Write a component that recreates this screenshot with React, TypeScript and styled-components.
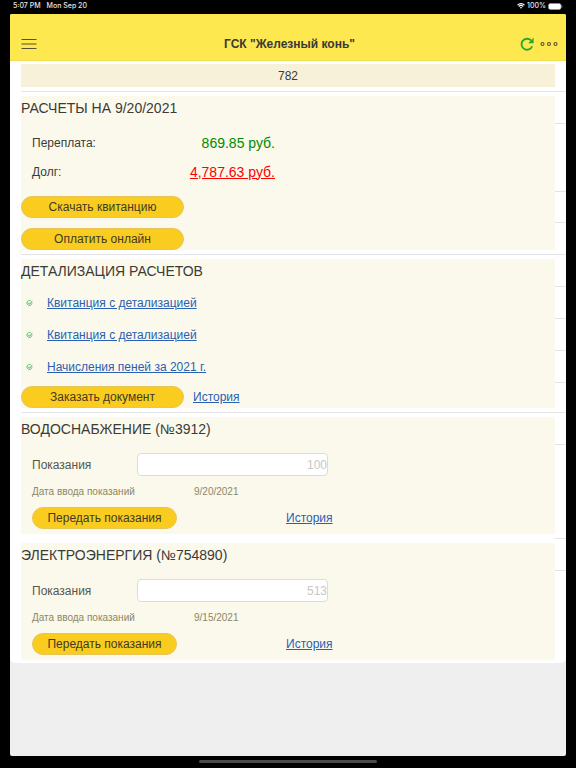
import React from "react";
import styled, { createGlobalStyle } from "styled-components";

const GlobalStyle = createGlobalStyle`
  *, *::before, *::after { box-sizing: border-box; }
  body {
    margin: 0;
    background: #000;
    color: #3b3b38;
    font-family: "Liberation Sans", Arial, sans-serif;
    font-size: 12px;
  }
  h1, h2, p, ul { margin: 0; padding: 0; font-weight: normal; }
`;

const Device = styled.div`
  display: flex;
  flex-direction: column;
  min-height: 100vh;
  padding: 0 10px;
  background: #000;
`;

const StatusBar = styled.div`
  display: flex;
  justify-content: space-between;
  align-items: center;
  height: 14px;
  padding: 0 3px;
  padding-bottom: 2px;
  color: #e8e8e8;
  font-family: Inter, sans-serif;
  font-size: 7px;
  font-weight: 500;
  line-height: 12px;
`;

const StatusGroup = styled.div<{ $gap: number }>`
  display: flex;
  align-items: center;
  gap: ${(p) => p.$gap}px;
`;

const Screen = styled.div`
  flex: 1;
  border-radius: 2px;
  overflow: hidden;
  background: #efefef;
`;

const Header = styled.header`
  display: grid;
  grid-template-columns: 1fr auto 1fr;
  align-items: center;
  height: 47px;
  padding: 14px 8px 0 11px;
  border-bottom: 1px solid #f3dc52;
  background: #fde850;
`;

const Title = styled.h1`
  font-size: 12px;
  font-weight: bold;
  color: #3a3935;
`;

const HeaderActions = styled.div`
  display: flex;
  justify-content: flex-end;
  align-items: center;
  gap: 6px;
`;

const IconButton = styled.button`
  display: flex;
  justify-self: start;
  padding: 0;
  border: 0;
  background: none;
  cursor: pointer;
`;

const Content = styled.main`
  padding: 3px 0 3px 11px;
  border-radius: 0 0 5px 5px;
  background: #fff;
`;

const Account = styled.p`
  margin-right: 11px;
  background: #f8f1da;
  line-height: 24px;
  height: 23px;
  text-align: center;
`;

const Divider = styled.hr<{ $gutterOnly?: boolean }>`
  height: 1px;
  margin: 4px 0;
  margin-left: ${(p) => (p.$gutterOnly ? "calc(100% - 11px)" : "0")};
  border: 0;
  background: #e4e4e6;
`;

const Row = styled.div<{ $height: number; $last?: boolean }>`
  display: flex;
  min-height: ${(p) => p.$height}px;

  &::after {
    content: "";
    width: 11px;
    border-bottom: ${(p) => (p.$last ? "0" : "1px solid #e4e4e6")};
  }
`;

const RowBody = styled.div<{ $last?: boolean; $align?: string }>`
  display: flex;
  flex: 1;
  align-items: ${(p) => p.$align ?? "center"};
  border-bottom: ${(p) => (p.$last ? "0" : "1px solid #fdfbf1")};
  background: #fbf9eb;
`;

const SectionTitle = styled.h2`
  padding-bottom: 3px;
  font-size: 14px;
  line-height: 20px;
`;

const Balance = styled.dl`
  display: grid;
  grid-template-columns: 142px 101px;
  margin: 0 0 0 11px;
  line-height: 29px;
`;

const Term = styled.dt`
  font-size: 12px;
`;

const Amount = styled.dd<{ $color: string }>`
  margin: 0;
  color: ${(p) => p.$color};
  font-size: 14px;
  text-align: right;
`;

const DebtLink = styled.a`
  color: #f00;
`;

const Link = styled.a`
  color: #2a5fb4;
  font-size: 12px;
`;

const PillButton = styled.button<{ $width: number }>`
  flex-shrink: 0;
  width: ${(p) => p.$width}px;
  height: 22px;
  padding: 0;
  border: 1px solid #e6c458;
  border-radius: 11px;
  background: #fbcc20;
  color: #3f3a22;
  font-family: inherit;
  font-size: 12px;
  line-height: 20px;
  cursor: pointer;
`;

const Actions = styled.div`
  display: flex;
  align-items: center;
  gap: 9px;
`;

const DocumentMark = styled.span`
  display: flex;
  width: 26px;
  padding-left: 5px;
`;

const MeterForm = styled.form`
  display: grid;
  flex: 1;
  grid-template-columns: 105fr 191fr 227fr;
  grid-template-rows: 23px 31px 22px;
  padding: 8px 0 4px 11px;
  align-items: center;
`;

const FieldLabel = styled.label`
  color: #565650;
`;

const Reading = styled.input`
  width: 100%;
  height: 23px;
  padding: 0;
  border: 1px solid #dcdcd8;
  border-radius: 4px;
  background: #fff;
  color: #3b3b38;
  font-family: inherit;
  font-size: 12px;
  text-align: right;

  &::placeholder { color: #c8c8c8; opacity: 1; }
`;

const DateNote = styled.p`
  display: grid;
  grid-column: 1 / -1;
  grid-template-columns: 162px auto;
  color: #8d8768;
  font-size: 10px;
`;

const MeterActions = styled.div`
  display: flex;
  grid-column: 1 / -1;
  align-items: center;
  gap: 109px;
`;

const HomeArea = styled.div`
  display: flex;
  justify-content: center;
  height: 12px;
  padding-top: 4px;
`;

const HomeIndicator = styled.div`
  width: 32%;
  height: 3px;
  border-radius: 2px;
  background: #4a4a4a;
`;

const WifiIcon = () => (
  <svg width="8" height="6" viewBox="0 0 16 12" fill="none" stroke="#fff" strokeWidth="2.4" aria-hidden="true">
    <path d="M1 4.2a10 10 0 0 1 14 0M3.6 7a6.300 6.300 0 0 1 8.800 0" />
    <path d="M5.600 8.900a3.500 3.500 0 0 1 4.800 0L8 11.500z" fill="#fff" stroke="none" />
  </svg>
);

const BatteryIcon = () => (
  <svg width="15" height="7" viewBox="0 0 15 7" aria-hidden="true">
    <rect x="0.5" y="0.5" width="12.500" height="6" rx="1.800" fill="#fff" stroke="#999" strokeWidth="0.6" />
    <path d="M13.800 2.300v2.400" stroke="#999" strokeWidth="0.8" />
  </svg>
);

const MenuIcon = () => (
  <svg width="16" height="12" viewBox="0 0 16 12" stroke="#57512e" strokeWidth="1.200" aria-hidden="true">
    <path d="M0.500 1.500h15M0.500 6h15M0.500 10.500h15" />
  </svg>
);

const RefreshIcon = () => (
  <svg width="14" height="14" viewBox="0 0 14 14" aria-hidden="true">
    <path d="M11 3.400A5.500 5.500 0 1 0 12.200 9.200" fill="none" stroke="#25a82b" strokeWidth="1.800" />
    <path d="M13.600 0.800v5.400H8.200z" fill="#25a82b" />
  </svg>
);

const MoreIcon = () => (
  <svg width="18" height="6" viewBox="0 0 18 6" fill="none" stroke="#57512e" strokeWidth="1.100" aria-hidden="true">
    <circle cx="2.500" cy="3" r="1.500" />
    <circle cx="9" cy="3" r="1.500" />
    <circle cx="15.500" cy="3" r="1.500" />
  </svg>
);

const CheckIcon = () => (
  <svg width="7" height="6" viewBox="0 0 14 12" fill="none" stroke="#35ae5c" aria-hidden="true">
    <path d="M11.800 5.200A5 5 0 1 1 9.500 1.700" strokeWidth="1.600" />
    <path d="M4.200 5.500l2.600 2.600L12.500 2.500" strokeWidth="2" />
  </svg>
);

const documents = ["Квитанция с детализацией", "Квитанция с детализацией", "Начисления пеней за 2021 г."];

const meters = [
  { id: "water", title: "ВОДОСНАБЖЕНИЕ (№3912)", reading: "100", date: "9/20/2021" },
  { id: "power", title: "ЭЛЕКТРОЭНЕРГИЯ (№754890)", reading: "513", date: "9/15/2021" },
];

const TitleRow = ({ children }: { children: React.ReactNode }) => (
  <Row $height={28}>
    <RowBody>
      <SectionTitle>{children}</SectionTitle>
    </RowBody>
  </Row>
);

const Meter = ({ id, title, reading, date }: (typeof meters)[number]) => (
  <section>
    <TitleRow>{title}</TitleRow>
    <Row $height={89} $last>
      <RowBody $last $align="flex-start">
        <MeterForm onSubmit={(e) => e.preventDefault()}>
          <FieldLabel htmlFor={id}>Показания</FieldLabel>
          <Reading id={id} placeholder={reading} inputMode="numeric" />
          <DateNote>
            <span>Дата ввода показаний</span>
            <span>{date}</span>
          </DateNote>
          <MeterActions>
            <PillButton $width={145}>Передать показания</PillButton>
            <Link href="#history">История</Link>
          </MeterActions>
        </MeterForm>
      </RowBody>
    </Row>
  </section>
);

export default function App() {
  return (
    <>
      <GlobalStyle />
      <Device>
        <StatusBar>
          <StatusGroup $gap={6}>
            <span>5:07 PM</span>
            <span>Mon Sep 20</span>
          </StatusGroup>
          <StatusGroup $gap={2}>
            <WifiIcon />
            <span>100%</span>
            <BatteryIcon />
          </StatusGroup>
        </StatusBar>
        <Screen>
          <Header>
            <IconButton aria-label="Меню">
              <MenuIcon />
            </IconButton>
            <Title>ГСК "Железный конь"</Title>
            <HeaderActions>
              <IconButton aria-label="Обновить">
                <RefreshIcon />
              </IconButton>
              <IconButton aria-label="Ещё">
                <MoreIcon />
              </IconButton>
            </HeaderActions>
          </Header>
          <Content>
            <Account>782</Account>
            <Divider />
            <section>
              <TitleRow>РАСЧЕТЫ НА 9/20/2021</TitleRow>
              <Row $height={68}>
                <RowBody>
                  <Balance>
                    <Term>Переплата:</Term>
                    <Amount $color="#008a00">869.85 руб.</Amount>
                    <Term>Долг:</Term>
                    <Amount $color="#f00">
                      <DebtLink href="#debt">4,787.63 руб.</DebtLink>
                    </Amount>
                  </Balance>
                </RowBody>
              </Row>
              <Row $height={31}>
                <RowBody>
                  <PillButton $width={163}>Скачать квитанцию</PillButton>
                </RowBody>
              </Row>
              <Row $height={27} $last>
                <RowBody $last $align="flex-end">
                  <PillButton $width={163}>Оплатить онлайн</PillButton>
                </RowBody>
              </Row>
            </section>
            <Divider />
            <section>
              <TitleRow>ДЕТАЛИЗАЦИЯ РАСЧЕТОВ</TitleRow>
              {documents.map((name, i) => (
                <Row $height={32} key={i}>
                  <RowBody>
                    <DocumentMark>
                      <CheckIcon />
                    </DocumentMark>
                    <Link href="#document">{name}</Link>
                  </RowBody>
                </Row>
              ))}
              <Row $height={25} $last>
                <RowBody $last $align="flex-end">
                  <Actions>
                    <PillButton $width={163}>Заказать документ</PillButton>
                    <Link href="#history">История</Link>
                  </Actions>
                </RowBody>
              </Row>
            </section>
            <Divider />
            <Meter {...meters[0]} />
            <Divider $gutterOnly />
            <Meter {...meters[1]} />
          </Content>
        </Screen>
        <HomeArea>
          <HomeIndicator />
        </HomeArea>
      </Device>
    </>
  );
}
